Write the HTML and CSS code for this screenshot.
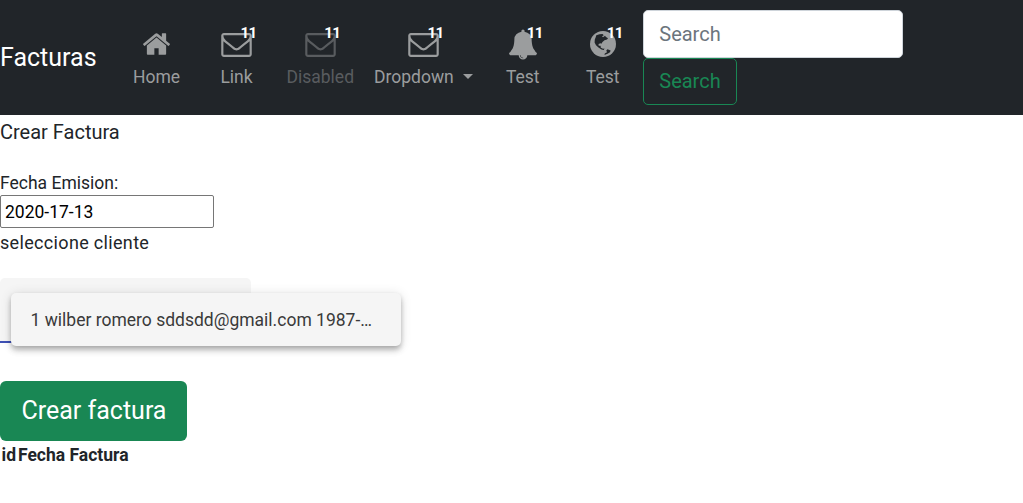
FILE: index.html
```html
<!DOCTYPE html>
<html lang="es">
<head>
<meta charset="utf-8">
<title>Facturas</title>
<link rel="stylesheet" href="styles.css">
</head>
<body>
<svg class="symbols" aria-hidden="true">
  <symbol id="envelope" viewBox="0 256 1792 1408"><path d="M1664 1504v-768q-32 36-69 66-268 206-426 338-51 43-83 67t-86.500 48.500-102.500 24.500h-2q-48 0-102.500-24.500t-86.500-48.500-83-67q-158-132-426-338-37-30-69-66v768q0 13 9.500 22.500t22.500 9.500h1472q13 0 22.500-9.500t9.500-22.500zm0-1051v-24.500l-.5-13-3-12.500-5.500-9-9-7.500-14-2.500h-1472q-13 0-22.500 9.500t-9.500 22.500q0 168 147 284 193 152 401 317 6 5 35 29.500t46 37.500 44.500 31.500 50.500 27.500 43 9h2q20 0 43-9t50.500-27.500 44.500-31.500 46-37.500 35-29.500q208-165 401-317 54-43 100.500-115.500t46.500-131.500zm128-37v1088q0 66-47 113t-113 47h-1472q-66 0-113-47t-47-113v-1088q0-66 47-113t113-47h1472q66 0 113 47t47 113z"/></symbol>
</svg>
<nav class="navbar">
  <a class="brand">Facturas</a>
  <ul class="nav">
    <li class="item"><span class="icon"><svg class="home" viewBox="89 253 1614 1283"><path d="M1472 992v480q0 26-19 45t-45 19h-384v-384h-256v384h-384q-26 0-45-19t-19-45v-480q0-1 .5-3t.5-3l575-474 575 474q1 2 1 6zm223-69l-62 74q-8 9-21 11h-3q-13 0-21-7l-692-577-692 577q-12 8-24 7-13-2-21-11l-62-74q-8-10-7-23.500t11-21.500l719-599q32-26 76-26t76 26l244 204v-195q0-14 9-23t23-9h192q14 0 23 9t9 23v408l219 182q10 8 11 21.500t-7 23.500z"/></svg></span><span class="label">Home</span></li>
    <li class="item"><span class="icon"><svg class="mail"><use href="#envelope"/></svg><b class="badge">11</b></span><span class="label">Link</span></li>
    <li class="item disabled"><span class="icon"><svg class="mail"><use href="#envelope"/></svg><b class="badge">11</b></span><span class="label">Disabled</span></li>
    <li class="item"><span class="icon"><svg class="mail"><use href="#envelope"/></svg><b class="badge">11</b></span><span class="label toggle">Dropdown</span></li>
    <li class="item"><span class="icon"><svg class="bell" viewBox="64 0 1664 1792"><path d="M912 1696q0-16-16-16-59 0-101.500-42.500t-42.500-101.500q0-16-16-16t-16 16q0 73 51.500 124.500t124.500 51.500q16 0 16-16zm816-288q0 52-38 90t-90 38h-448q0 106-75 181t-181 75-181-75-75-181h-448q-52 0-90-38t-38-90q50-42 91-88t85-119.500 74.500-158.500 50-206 19.500-260q0-152 117-282.500t307-158.500q-8-19-8-39 0-40 28-68t68-28 68 28 28 68q0 20-8 39 190 28 307 158.500t117 282.500q0 139 19.500 260t50 206 74.500 158.500 85 119.500 91 88z"/></svg><b class="badge">11</b></span><span class="label">Test</span></li>
    <li class="item"><span class="icon"><svg class="globe" viewBox="0 0 26 26"><circle cx="13" cy="13" r="13"/><path class="sea" d="M6.300 4.200 9.500 3.200 12.500 3 13.800 4.200 12 5.300 13 6.300 15 4.800 16 6 18 7.200 17 8.600 14.500 9.300 12.500 11 11.400 12.800 10.500 12.200 8.500 13 8.700 14.800 10.600 14.700 10.800 16.800 13 17.800 14.500 17.600 13.800 19 11.500 18.500 8.500 16.500 6 14.200 4.600 11.400 4.800 8.500 5.600 6.500zM17.500 18.300 20.600 19.400 20 21.300 17.500 22.800 14.500 24 14.800 22.600 17 21.200 16.300 19.600z"/></svg><b class="badge">11</b></span><span class="label">Test</span></li>
  </ul>
  <form class="search">
    <input class="search-input" type="text" placeholder="Search">
    <button class="search-button" type="button">Search</button>
  </form>
</nav>
<main>
  <h2 class="title">Crear Factura</h2>
  <label class="date-label" for="fecha">Fecha Emision:</label>
  <input class="date" id="fecha" type="text" value="2020-17-13">
  <p class="client-label">seleccione cliente</p>
  <div class="select"><div class="menu">1 wilber romero sddsdd@gmail.com 1987-…</div></div>
  <button class="create" type="button">Crear factura</button>
  <table class="list"><tr><th>id</th><th>Fecha Factura</th></tr></table>
</main>
</body>
</html>
```
FILE: styles.css
```css
* { box-sizing: border-box; }
body { margin: 0; background: #fff; color: #212529; font-family: Roboto, sans-serif; font-size: 17.5px; overflow: hidden; }
input, button { font-family: inherit; margin: 0; }
.symbols { display: none; }
.navbar { display: flex; align-items: center; height: 115px; background: #212529; }
.brand { width: 116.500px; color: #fff; font-size: 25px; line-height: 38px; }
.nav { display: flex; margin: 0; padding: 0; list-style: none; }
.item { display: flex; flex-direction: column; align-items: center; min-width: 80px; padding: 0 10px; color: #9b9d9e; }
.disabled { color: #595c5f; }
.icon { position: relative; display: flex; align-items: center; justify-content: center; width: 32px; height: 38px; }
.icon svg { display: block; fill: currentColor; }
.home { width: 27px; height: 22px; margin-bottom: 1px; }
.mail { width: 31px; height: 24px; margin-top: 1px; }
.bell { width: 28px; height: 31px; margin-bottom: 1px; }
.globe { width: 26px; height: 26px; margin-bottom: 1px; }
.icon .sea { fill: #212529; }
.badge { position: absolute; top: -1px; left: 20px; color: #fff; font-size: 15px; line-height: 17px; letter-spacing: -.5px; }
.label { line-height: 26px; white-space: nowrap; }
.toggle::after { content: ""; display: inline-block; margin-left: 9px; vertical-align: 4px; border: 5.250px solid transparent; border-top-color: currentColor; border-bottom: 0; }
.search { display: flex; flex-direction: column; align-items: flex-start; }
.search-input { width: 260px; height: 48px; padding: 0 15.500px; border: 1px solid #ced4da; border-radius: 5px; background: #fff; font-size: 20px; }
.search-input::placeholder { color: #6c757d; opacity: 1; }
.search-button { height: 47px; padding: 0 15.500px 2px; border: 1px solid #198754; border-radius: 5px; background: transparent; color: #198754; font-size: 20px; }
.title { margin: 0; padding-top: 2px; font-size: 20px; font-weight: 400; line-height: 30px; }
.date-label { display: block; margin-top: 24px; line-height: 24px; }
.date { display: block; width: 214px; height: 33px; padding: 1px 4px; border: 1px solid #767676; border-radius: 2px; font-size: 17.500px; color: #000; }
.client-label { margin: 2px 0 0; font-size: 18px; line-height: 26px; letter-spacing: .33px; }
.select { position: relative; width: 251px; height: 65px; margin-top: 22px; border-bottom: 2px solid #3f51b5; border-radius: 5px 5px 0 0; background: #f5f5f5; }
.menu { position: absolute; top: 15px; left: 10.500px; width: 390px; height: 53px; padding: 1px 20px 0; white-space: nowrap; border-radius: 5px; background: #f5f5f5; color: #3a3a3a; line-height: 53px; box-shadow: 0 2.500px 5px -1px #0003, 0 5px 6px #00000024, 0 1px 12px #0000001f; }
.create { display: block; height: 60px; margin-top: 38px; padding: 0 21px 1px 21.500px; border: 0; border-radius: 6px; background: #198754; color: #fff; font-size: 25px; }
.list { margin-left: -.5px; border-spacing: 2px; font-size: 17.500px; line-height: 25px; }
.list th { padding: 0; }
```
